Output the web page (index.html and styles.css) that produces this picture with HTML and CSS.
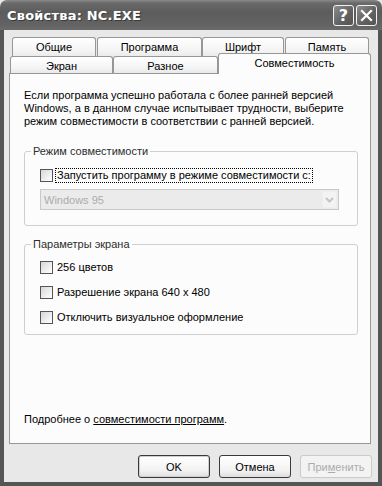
FILE: index.html
```html
<!DOCTYPE html>
<html lang="ru">
<head>
    <meta charset="UTF-8">
    <title>Свойства: NC.EXE</title>
    <link rel="stylesheet" href="styles.css">
</head>
<body>
    <div class="window">
        <!-- заголовок окна -->
        <div class="titlebar">
            <span class="title">Свойства: NC.EXE</span>
            <div class="title-buttons">
                <div class="tb-btn help">?</div>
                <div class="tb-btn close">
                    <svg width="13" height="13" viewBox="0 0 13 13">
                        <path d="M2 2 L11 11 M11 2 L2 11" stroke="#fff" stroke-width="2.2" stroke-linecap="square"/>
                    </svg>
                </div>
            </div>
        </div>

        <div class="frame">
            <!-- вкладки -->
            <div class="tabs">
                <div class="tab-row back">
                    <div class="tab w84">Общие</div>
                    <div class="tab w105 gap">Программа</div>
                    <div class="tab w82">Шрифт</div>
                    <div class="tab w84 gap">Память</div>
                </div>
                <div class="tab-row front">
                    <div class="tab w103">Экран</div>
                    <div class="tab w105">Разное</div>
                    <div class="tab active">Совместимость</div>
                </div>
            </div>

            <div class="panel">
                <p class="intro">Если программа успешно работала с более ранней версией Windows, а в данном случае испытывает трудности, выберите режим совместимости в соответствии с ранней версией.</p>

                <fieldset class="group first">
                    <legend>Режим совместимости</legend>
                    <div class="group-body">
                        <label class="check">
                            <span class="box"></span>
                            <span class="focus">Запустить программу в режиме совместимости с:</span>
                        </label>
                        <div class="select disabled">
                            <span class="select-text">Windows 95</span>
                            <span class="select-arrow">
                                <svg width="9" height="6" viewBox="0 0 9 6">
                                    <path d="M1 1 L4.5 4.5 L8 1" fill="none" stroke="#c4c4c4" stroke-width="2"/>
                                </svg>
                            </span>
                        </div>
                    </div>
                </fieldset>

                <fieldset class="group second">
                    <legend>Параметры экрана</legend>
                    <div class="group-body list">
                        <label class="check"><span class="box"></span><span>256 цветов</span></label>
                        <label class="check"><span class="box"></span><span>Разрешение экрана 640 x 480</span></label>
                        <label class="check"><span class="box"></span><span>Отключить визуальное оформление</span></label>
                    </div>
                </fieldset>

                <p class="more">Подробнее о <a href="#">совместимости программ</a>.</p>
            </div>

            <div class="buttons">
                <button class="btn default">OK</button>
                <button class="btn">Отмена</button>
                <button class="btn" disabled>При<u>м</u>енить</button>
            </div>
        </div>
    </div>
</body>
</html>
```
FILE: styles.css
```css
body {
    margin: 0;
    background-color: #e8e8e8;
    font-family: 'Liberation Sans', Arial, sans-serif;
    font-size: 11px;
    color: #000;
}

.window {
    width: 382px;
    height: 486px;
    display: flex;
    flex-direction: column;
}

/* заголовок */
.titlebar {
    height: 30px;
    display: flex;
    align-items: center;
    justify-content: space-between;
    padding: 0 5px 0 7px;
    border-radius: 7px 7px 0 0;
    background: linear-gradient(#8a8a8a 0, #6a6a6a 3px, #5c5c5c 12px, #626262 24px, #6b6b6b 30px);
    box-sizing: border-box;
}

.title {
    color: #fff;
    font-family: 'DejaVu Sans', sans-serif;
    font-weight: bold;
    font-size: 13px;
    letter-spacing: 0.2px;
    text-shadow: 1px 1px 0 #3a3a3a;
    padding-top: 1px;
}

.title-buttons {
    display: flex;
    gap: 2px;
    padding-top: 1px;
}

.tb-btn {
    width: 19px;
    height: 19px;
    border: 1px solid #f2f2f2;
    border-radius: 3px;
    background: linear-gradient(135deg, #8c8c8c, #606060 60%, #555);
    display: flex;
    align-items: center;
    justify-content: center;
    color: #fff;
}

.help {
    font-family: 'DejaVu Sans', sans-serif;
    font-weight: bold;
    font-size: 16px;
}

/* рамка */
.frame {
    flex: 1;
    border: 4px solid #555;
    border-top: none;
    display: flex;
    flex-direction: column;
    background-color: #e8e8e8;
}

/* вкладки */
.tabs {
    padding-top: 7px;
}

.tab-row {
    display: flex;
    align-items: flex-end;
}

.tab-row.back {
    padding-left: 8px;
    height: 19px;
}

.tab-row.front {
    padding-left: 6px;
    height: 17px;
    position: relative;
    z-index: 1;
}

.tab {
    box-sizing: border-box;
    border: 1px solid #979797;
    border-bottom: none;
    border-radius: 3px 3px 0 0;
    background: linear-gradient(#ffffff, #f3f3f3 70%, #e9e9e9);
    text-align: center;
    line-height: 16px;
}

.back .tab {
    height: 20px;
    line-height: 18px;
    align-self: flex-start;
}

.front .tab {
    height: 17px;
    line-height: 18px;
}

.w84 { width: 84px; }
.w82 { width: 82px; }
.w103 { width: 103px; }
.w105 { width: 105px; }
.gap { margin-left: 1px; }

.front .tab.active {
    width: 153px;
    height: 21px;
    margin-bottom: -1px;
    background: #fcfcfc;
    line-height: 19px;
}

/* страница вкладки */
.panel {
    margin: 0 7px 0 5px;
    height: 371px;
    box-sizing: border-box;
    border: 1px solid #979797;
    background-color: #fcfcfc;
    padding: 15px 13px 17px 14px;
    display: flex;
    flex-direction: column;
}

.intro {
    margin: 0;
    line-height: 13px;
    padding-right: 10px;
}

.group {
    margin: 0;
    border: 1px solid #cfcfcf;
    border-radius: 3px;
    padding: 0;
    width: 334px;
    box-sizing: border-box;
}

.group legend {
    margin-left: 6px;
    padding: 0 2px;
    line-height: 13px;
    color: #2e2e2e;
}

.group-body {
    padding-left: 15px;
}

.group.first {
    margin-top: 17px;
    height: 81px;
}

.group.first .group-body {
    padding-top: 11px;
}

.group.second {
    margin-top: 12px;
    height: 97px;
}

.group-body.list {
    padding-top: 10px;
    display: flex;
    flex-direction: column;
    gap: 12px;
}

.check {
    display: flex;
    align-items: center;
    height: 13px;
    line-height: 13px;
}

.box {
    width: 11px;
    height: 11px;
    border: 1px solid #555;
    background: linear-gradient(135deg, #d6d6d6, #f4f4f4 70%, #fff);
    margin-right: 4px;
    flex-shrink: 0;
}

.focus {
    outline: 1px dotted #000;
    outline-offset: 0;
    padding: 0 1px;
    margin-left: -1px;
}

.select {
    margin-top: 7px;
    width: 299px;
    height: 21px;
    box-sizing: border-box;
    border: 1px solid #c9c9c9;
    background-color: #ebebeb;
    display: flex;
    align-items: center;
    justify-content: space-between;
    padding: 0 1px 0 3px;
}

.select-text {
    color: #acacac;
}

.select-arrow {
    width: 15px;
    height: 17px;
    border: 1px solid #efefef;
    border-radius: 2px;
    background-color: #f3f3f3;
    box-sizing: border-box;
    display: flex;
    align-items: center;
    justify-content: center;
}

.more {
    margin: auto 0 0 0;
    line-height: 13px;
}

.more a {
    color: #000;
    text-decoration: underline;
}

/* кнопки */
.buttons {
    display: flex;
    justify-content: flex-end;
    gap: 9px;
    padding: 11px 6px 0 0;
}

.btn {
    width: 72px;
    height: 23px;
    font-family: 'Liberation Sans', Arial, sans-serif;
    font-size: 11px;
    color: #000;
    border: 1px solid #3a3a3a;
    border-radius: 3px;
    background: linear-gradient(#ffffff, #f2f2f2 70%, #dedede);
    padding: 0;
}

.btn.default {
    box-shadow: inset 0 0 0 1px #cfcfcf;
}

.btn:disabled {
    border-color: #cacaca;
    color: #acacac;
    background: #f3f3f3;
}
```
